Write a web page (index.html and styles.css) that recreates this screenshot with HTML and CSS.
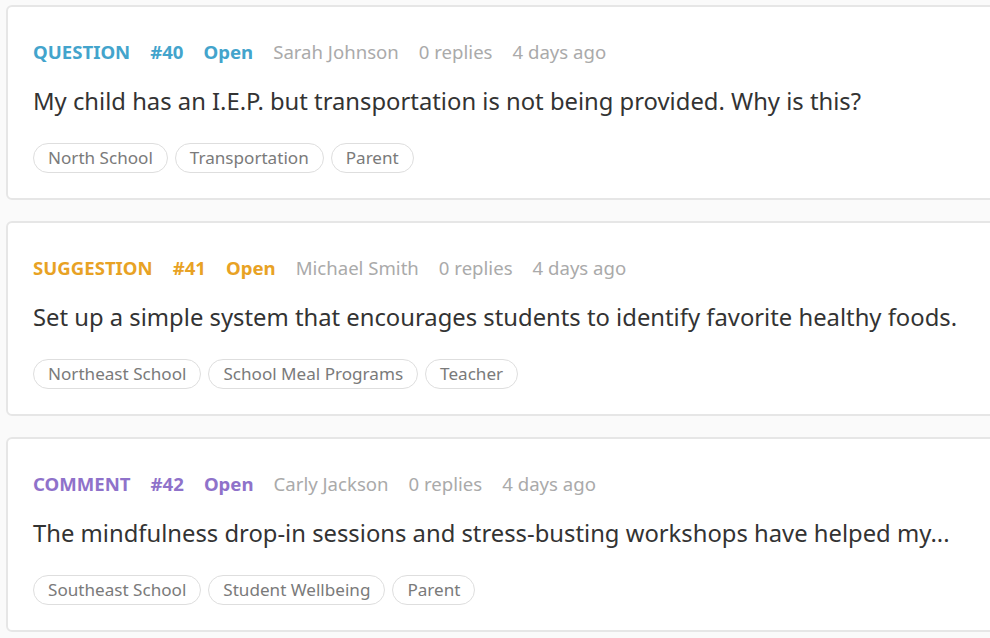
FILE: index.html
```html
<!DOCTYPE html>
<html lang="en">

<head>
    <meta charset="UTF-8">
    <meta name="viewport" content="width=device-width, initial-scale=1.0">
    <title>Feedback</title>
    <link rel="stylesheet" href="styles.css">
</head>

<body>
    <main class="feed">
        <article class="post question">
            <div class="post-meta">
                <span class="post-type">QUESTION</span>
                <span class="post-id">#40</span>
                <span class="post-status">Open</span>
                <span class="post-author">Sarah Johnson</span>
                <span class="post-replies">0 replies</span>
                <span class="post-date">4 days ago</span>
            </div>
            <p class="post-title">My child has an I.E.P. but transportation is not being provided. Why is this?</p>
            <div class="post-tags">
                <span class="tag">North School</span>
                <span class="tag">Transportation</span>
                <span class="tag">Parent</span>
            </div>
        </article>

        <article class="post suggestion">
            <div class="post-meta">
                <span class="post-type">SUGGESTION</span>
                <span class="post-id">#41</span>
                <span class="post-status">Open</span>
                <span class="post-author">Michael Smith</span>
                <span class="post-replies">0 replies</span>
                <span class="post-date">4 days ago</span>
            </div>
            <p class="post-title">Set up a simple system that encourages students to identify favorite healthy foods.</p>
            <div class="post-tags">
                <span class="tag">Northeast School</span>
                <span class="tag">School Meal Programs</span>
                <span class="tag">Teacher</span>
            </div>
        </article>

        <article class="post comment">
            <div class="post-meta">
                <span class="post-type">COMMENT</span>
                <span class="post-id">#42</span>
                <span class="post-status">Open</span>
                <span class="post-author">Carly Jackson</span>
                <span class="post-replies">0 replies</span>
                <span class="post-date">4 days ago</span>
            </div>
            <p class="post-title">The mindfulness drop-in sessions and stress-busting workshops have helped my...</p>
            <div class="post-tags">
                <span class="tag">Southeast School</span>
                <span class="tag">Student Wellbeing</span>
                <span class="tag">Parent</span>
            </div>
        </article>
    </main>
</body>

</html>
```

FILE: styles.css
```css
* {
    margin: 0;
    padding: 0;
    box-sizing: border-box;
    font-family: 'Noto Sans', 'Open Sans', sans-serif;
}

body {
    background-color: #fafafa;
    color: #333;
    overflow: hidden;
}

.feed {
    display: flex;
    flex-direction: column;
    gap: 21px;
    padding: 5px 0 0 6px;
    width: 1010px;
}

.post {
    background: white;
    border: 2px solid #e6e6e6;
    border-radius: 6px;
    padding: 32px 25px 25px;
    height: 195px;
}

.post-meta {
    display: flex;
    gap: 20px;
    font-size: 18.6px;
    line-height: 26px;
    color: #aaa;
}

.post-type,
.post-id,
.post-status {
    font-weight: bold;
}

.question .post-type,
.question .post-id,
.question .post-status {
    color: #43a4cc;
}

.suggestion .post-type,
.suggestion .post-id,
.suggestion .post-status {
    color: #e8a224;
}

.comment .post-type,
.comment .post-id,
.comment .post-status {
    color: #8f72ca;
}

.post-title {
    margin-top: 20px;
    font-size: 23.8px;
    line-height: 32px;
    color: #333;
}

.post-tags {
    display: flex;
    gap: 7px;
    margin-top: 26px;
}

.tag {
    height: 30px;
    padding: 0 14px;
    border: 1px solid #dedede;
    border-radius: 15px;
    font-size: 17.1px;
    line-height: 28px;
    color: #7a7a7a;
}
```
